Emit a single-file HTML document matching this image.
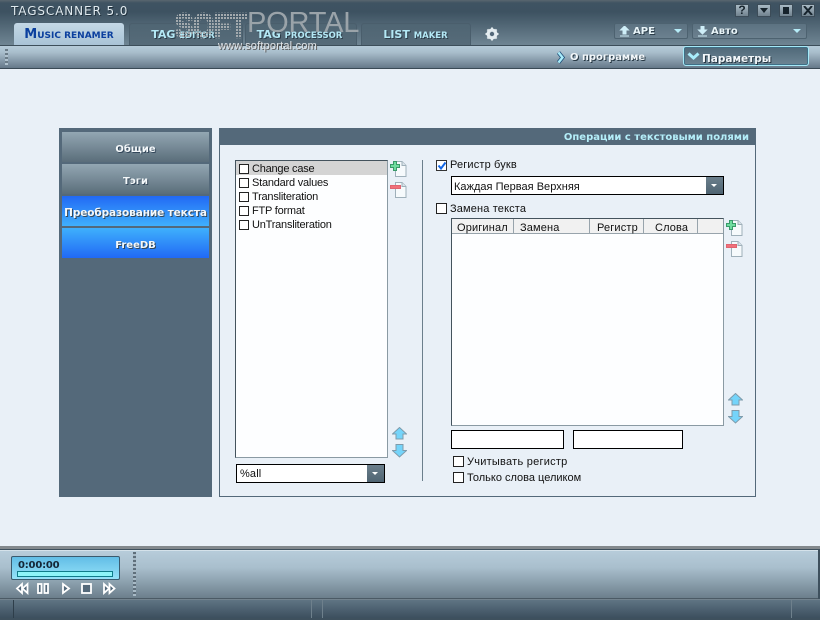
<!DOCTYPE html>
<html><head><meta charset="utf-8">
<style>
html,body{margin:0;padding:0;width:820px;height:620px;overflow:hidden;background:#e9f0f7}
body{position:relative;font-family:"Liberation Sans","DejaVu Sans",sans-serif;font-size:11px;color:#111}
.a{position:absolute;box-sizing:border-box;white-space:nowrap}
.t{position:absolute;white-space:nowrap;line-height:14px;letter-spacing:.15px}
.l{letter-spacing:-.22px}
.b{font-weight:bold;font-family:"DejaVu Sans",sans-serif}
.cb{position:absolute;width:11px;height:11px;box-sizing:border-box;border:1px solid #222;background:#fff}
.cs{width:10px;height:10px}
.nav{position:absolute;left:62px;width:147px;height:30px;text-align:center;line-height:35px;font-family:"DejaVu Sans",sans-serif;font-weight:bold;font-size:10px;color:#f4f8fa;text-shadow:1px 1px 0 #33475a;overflow:hidden}
.g{background:linear-gradient(#93a7b3,#5a6d7a)}
.tab{position:absolute;top:23px;height:22px;background:linear-gradient(#4f6573,#566b79);border-radius:3px 3px 0 0;border:1px solid #4a5e6c;border-bottom:0;box-sizing:border-box;text-align:center;line-height:22px;font-family:"DejaVu Sans",sans-serif;font-weight:bold;color:#b4e8f5;font-size:11px;text-shadow:1px 1px 0 #2c3d49}
.tab small{font-size:8.5px}
.wbtn{position:absolute;top:4px;width:14px;height:13px;background:linear-gradient(#a9bac4,#71838f);border:1px solid #3c4c58;box-sizing:border-box}
.combo{position:absolute;top:23px;height:16px;box-sizing:border-box;background:linear-gradient(#5c7281,#6c818f);border:1px solid #4d6270;border-radius:2px;font-family:"DejaVu Sans",sans-serif;font-weight:bold;font-size:10px;color:#e8f4f8;line-height:15px;text-shadow:1px 1px 0 #2c3d49}
.input{position:absolute;box-sizing:border-box;border:1px solid #000;background:#fff;height:19px}
.dd{position:absolute;top:0;right:0;width:17px;height:17px;background:linear-gradient(#6b7f8c,#4f6472)}
.dd:after{content:"";position:absolute;left:5px;top:7px;border:3px solid transparent;border-top:3px solid #fff;border-bottom:0}
</style></head><body>

<!-- header -->
<div class="a" style="left:0;top:0;width:820px;height:45px;background:linear-gradient(#5a666f 0,#3f5362 3px,#3d5261 12px,#6f8593 45px)"></div>
<div class="a b" style="left:11px;top:4px;font-size:12px;color:#dfe9ee;letter-spacing:.9px;line-height:14px;text-shadow:1px 1px 0 #22323e;font-weight:normal">TAGSCANNER 5.0</div>

<div class="tab" style="left:129px;width:114px;padding-right:6px">TAG <small>EDITOR</small></div>
<div class="tab" style="left:245px;width:112px;padding-right:3px">TAG <small>PROCESSOR</small></div>
<div class="tab" style="left:361px;width:110px;padding-right:1px">LIST <small>MAKER</small></div>
<div class="a" style="left:14px;top:23px;width:110px;height:22px;background:linear-gradient(#c4d8e6,#a9c3d6);border-radius:3px 3px 0 0;text-align:center;font-family:'DejaVu Sans',sans-serif;font-weight:bold;color:#0b3f9e;font-size:13px;line-height:24px"><span>M</span><span style="font-size:9px">USIC RENAMER</span></div>

<!-- watermark -->
<svg class="a" style="left:170px;top:8px;z-index:1" width="85" height="34" viewBox="0 0 85 34">
<defs><pattern id="dots" width="3" height="3" patternUnits="userSpaceOnUse"><rect width="2" height="2" fill="#a3aaae"/></pattern></defs>
<text x="5" y="29" font-family="Liberation Sans" font-weight="bold" font-size="33" fill="url(#dots)" stroke="url(#dots)" stroke-width="2.500" textLength="72" lengthAdjust="spacingAndGlyphs">SOFT</text>
</svg>
<div class="a" style="left:247px;top:8px;font-size:29px;color:#9aa3a9;line-height:30px;letter-spacing:-.2px">PORTAL</div>
<div class="a" style="left:218px;top:40px;font-size:11px;color:#dfe4e8;line-height:13px;text-shadow:1px 1px 0 #555;letter-spacing:.2px;z-index:3">www.softportal.com</div>

<!-- gear -->
<svg class="a" style="left:484px;top:26px" width="16" height="16" viewBox="0 0 16 16"><circle cx="8" cy="8" r="4.2" fill="none" stroke="#e4ecf0" stroke-width="2.6"/><path d="M8 1.500v13M1.500 8h13M3.400 3.400l9.200 9.200M12.600 3.400l-9.200 9.200" stroke="#e4ecf0" stroke-width="2"/><circle cx="8" cy="8" r="2.2" fill="#54697a"/></svg>

<!-- window buttons -->
<div class="wbtn" style="left:735px;text-align:center;font:bold 12px/11px 'Liberation Sans',sans-serif;color:#16232c">?</div>
<div class="wbtn" style="left:757px"><div style="position:absolute;left:2px;top:3px;border:4.5px solid transparent;border-top:5px solid #16232c;border-bottom:0"></div></div>
<div class="wbtn" style="left:779px"><div style="position:absolute;left:3px;top:2px;width:6px;height:7px;background:#16232c"></div></div>
<div class="wbtn" style="left:801px"><svg style="position:absolute;left:1px;top:1px" width="10" height="9"><path d="M1 0l8 9M9 0l-8 9" stroke="#16232c" stroke-width="2"/></svg></div>

<!-- combos -->
<div class="combo" style="left:614px;width:74px"><svg style="position:absolute;left:4px;top:2px" width="11" height="11"><path d="M5.500 0l4 4H7v4H4V4H1.500zM1 10h9" fill="#cfeef8" stroke="#cfeef8"/></svg><span style="position:absolute;left:18px">APE</span><div style="position:absolute;right:5px;top:5px;border:4px solid transparent;border-top:4px solid #b6ecf8;border-bottom:0"></div></div>
<div class="combo" style="left:692px;width:115px"><svg style="position:absolute;left:4px;top:2px" width="11" height="11"><path d="M5.500 8l4-4H7V0H4v4H1.500zM1 10h9" fill="#cfeef8" stroke="#cfeef8"/></svg><span style="position:absolute;left:18px">Авто</span><div style="position:absolute;right:5px;top:5px;border:4px solid transparent;border-top:4px solid #b6ecf8;border-bottom:0"></div></div>

<!-- toolbar -->
<div class="a" style="left:0;top:45px;width:820px;height:24px;background:linear-gradient(#b6cbd9,#a8bdcb 30%,#66798a);border-top:1px solid #3d4e5a;border-bottom:1px solid #3a4a56"></div>
<div class="a" style="left:5px;top:49px;width:3px;height:16px;background:repeating-linear-gradient(#6b7c88 0 2px,#b0c2ce 2px 4px)"></div>

<svg class="a" style="left:556px;top:51px" width="10" height="13"><path d="M2.500 1.500l4 5-4 5" fill="none" stroke="#1f4f79" stroke-width="4"/><path d="M2.500 1.500l4 5-4 5" fill="none" stroke="#a8ecfb" stroke-width="2.400"/></svg>
<div class="a b" style="left:570px;top:51px;font-size:10px;color:#f2f7fa;line-height:13px;text-shadow:1px 1px 0 #263743">О программе</div>

<div class="a" style="left:683px;top:46px;width:126px;height:20px;border:1px solid #a5e9f7;border-radius:3px;background:linear-gradient(#4f6878,#6d8594);box-shadow:inset 0 0 0 1px #3f6f86"></div>
<svg class="a" style="left:687px;top:52px" width="13" height="9"><path d="M1.500 1.500l5 4.500 5-4.500" fill="none" stroke="#a8ecfb" stroke-width="3"/></svg>
<div class="a b" style="left:702px;top:52px;font-size:10.5px;color:#f2f7fa;line-height:14px;text-shadow:1px 1px 0 #263743">Параметры</div>

<!-- left panel -->
<div class="a" style="left:59px;top:128px;width:153px;height:369px;background:#54697a"></div>
<div class="nav g" style="top:132px">Общие</div>
<div class="nav g" style="top:164px">Тэги</div>
<div class="nav" style="top:196px;background:linear-gradient(#2169f5,#3fb0fc);font-size:10.5px;letter-spacing:-.1px">Преобразование текста</div>
<div class="nav" style="top:228px;background:linear-gradient(#3fb0fc,#2169f5)">FreeDB</div>

<!-- right panel -->
<div class="a" style="left:219px;top:128px;width:537px;height:369px;border:1px solid #54697a;background:#e9f0f7"></div>
<div class="a" style="left:219px;top:128px;width:537px;height:17px;background:#54697a;color:#b4eef9;text-align:right;padding-right:7px;font:bold 10px/20px 'DejaVu Sans',sans-serif">Операции с текстовыми полями</div>

<!-- list -->
<div class="a" style="left:235px;top:160px;width:153px;height:298px;background:#fdfeff;border:1px solid #8a9aa3;border-top-color:#44535d;border-left-color:#44535d"></div>
<div class="a" style="left:236px;top:161px;width:151px;height:14px;background:#d4d4d4"></div>
<div class="cb cs" style="left:239px;top:164px"></div><div class="t l" style="left:252px;top:162px">Change case</div>
<div class="cb cs" style="left:239px;top:178px"></div><div class="t l" style="left:252px;top:176px">Standard values</div>
<div class="cb cs" style="left:239px;top:192px"></div><div class="t l" style="left:252px;top:190px">Transliteration</div>
<div class="cb cs" style="left:239px;top:206px"></div><div class="t l" style="left:252px;top:204px">FTP format</div>
<div class="cb cs" style="left:239px;top:220px"></div><div class="t l" style="left:252px;top:218px">UnTransliteration</div>

<!-- add / remove icons left -->
<svg class="a" style="left:389px;top:159px" width="20" height="40" viewBox="0 0 20 40">
<path d="M6.500 2.500h6.500l4 4v11H6.500z" fill="#f6fafc" stroke="#9fb0ba"/><path d="M13 2.500v4h4" fill="#dbe5ea" stroke="#9fb0ba"/>
<path d="M4.500 2.500v3h-3v3h3v3h3v-3h3v-3h-3v-3z" fill="#6fdc9f" stroke="#3a9a6a"/>
<path d="M6.500 23.500h6.500l4 4v11H6.500z" fill="#f6fafc" stroke="#9fb0ba"/><path d="M13 23.500v4h4" fill="#dbe5ea" stroke="#9fb0ba"/>
<rect x="1.500" y="26.500" width="10" height="3" fill="#f0707a" stroke="#e06470"/>
</svg>
<!-- arrows left -->
<svg class="a" style="left:392px;top:427px" width="15" height="31" viewBox="0 0 15 31">
<path d="M7.500 .5L14.500 7H11v5H4V7H.500z" fill="#74d4fa" stroke="#7f9bab"/>
<path d="M4 17.500h7v6h3.500L7.500 30 .5 23.500H4z" fill="#74d4fa" stroke="#7f9bab"/>
</svg>

<!-- %all combo -->
<div class="input" style="left:236px;top:464px;width:149px"><div class="t" style="left:3px;top:2px">%all</div><div class="dd"></div></div>

<!-- divider -->
<div class="a" style="left:422px;top:160px;width:1px;height:321px;background:#6b7f8c"></div>

<!-- right -->
<div class="cb" style="left:436px;top:160px;width:11px;height:11px;border-color:#333"></div>
<svg class="a" style="left:437px;top:161px" width="10" height="10"><path d="M1.500 4.500l2.500 3 4.500-6" fill="none" stroke="#1367e6" stroke-width="2"/></svg>
<div class="t" style="left:450px;top:158px">Регистр букв</div>

<div class="input" style="left:451px;top:176px;width:273px"><div class="t" style="left:2px;top:3px;letter-spacing:.02px">Каждая Первая Верхняя</div><div class="dd"></div></div>

<div class="cb" style="left:436px;top:203px"></div>
<div class="t" style="left:450px;top:202px">Замена текста</div>

<!-- table -->
<div class="a" style="left:451px;top:218px;width:273px;height:208px;background:#fdfeff;border:1px solid #8a9aa3;border-top-color:#44535d;border-left-color:#44535d"></div>
<div class="a" style="left:452px;top:219px;width:271px;height:15px;background:#f1f1f1;border-bottom:1px solid #98a4ac"></div>
<div class="a" style="left:513px;top:219px;width:1px;height:15px;background:#98a4ac"></div>
<div class="a" style="left:589px;top:219px;width:1px;height:15px;background:#98a4ac"></div>
<div class="a" style="left:643px;top:219px;width:1px;height:15px;background:#98a4ac"></div>
<div class="a" style="left:697px;top:219px;width:1px;height:15px;background:#98a4ac"></div>
<div class="t" style="left:457px;top:221px">Оригинал</div>
<div class="t" style="left:520px;top:221px">Замена</div>
<div class="t" style="left:597px;top:221px">Регистр</div>
<div class="t" style="left:655px;top:221px">Слова</div>

<svg class="a" style="left:725px;top:218px" width="20" height="40" viewBox="0 0 20 40">
<path d="M6.500 2.500h6.500l4 4v11H6.500z" fill="#f6fafc" stroke="#9fb0ba"/><path d="M13 2.500v4h4" fill="#dbe5ea" stroke="#9fb0ba"/>
<path d="M4.500 2.500v3h-3v3h3v3h3v-3h3v-3h-3v-3z" fill="#6fdc9f" stroke="#3a9a6a"/>
<path d="M6.500 23.500h6.500l4 4v11H6.500z" fill="#f6fafc" stroke="#9fb0ba"/><path d="M13 23.500v4h4" fill="#dbe5ea" stroke="#9fb0ba"/>
<rect x="1.500" y="26.500" width="10" height="3" fill="#f0707a" stroke="#e06470"/>
</svg>
<svg class="a" style="left:728px;top:393px" width="15" height="31" viewBox="0 0 15 31">
<path d="M7.500 .5L14.500 7H11v5H4V7H.500z" fill="#74d4fa" stroke="#7f9bab"/>
<path d="M4 17.500h7v6h3.500L7.500 30 .5 23.500H4z" fill="#74d4fa" stroke="#7f9bab"/>
</svg>

<div class="input" style="left:451px;top:430px;width:113px"></div>
<div class="input" style="left:573px;top:430px;width:110px"></div>

<div class="cb" style="left:453px;top:456px"></div>
<div class="t" style="left:467px;top:455px;letter-spacing:.25px">Учитывать регистр</div>
<div class="cb" style="left:453px;top:472px"></div>
<div class="t" style="left:467px;top:471px;letter-spacing:0">Только слова целиком</div>

<!-- bottom -->
<div class="a" style="left:0;top:546px;width:820px;height:74px;background:#3e505d"></div>
<div class="a" style="left:0;top:546px;width:820px;height:3px;background:#83898d"></div>
<div class="a" style="left:0;top:550px;width:818px;height:49px;background:linear-gradient(#b7ccda,#a9bfcd 35%,#6c7f8c);border-top:1px solid #d5e2ea;border-bottom:1px solid #4b5a65"></div>
<div class="a" style="left:0;top:599px;width:820px;height:19px;background:linear-gradient(#5f7483,#3c4f5e);border-top:1px solid #73838e"></div>
<div class="a" style="left:13px;top:600px;width:1px;height:18px;background:#2e3e4a"></div>
<div class="a" style="left:791px;top:600px;width:1px;height:18px;background:#6e808c"></div>
<div class="a" style="left:311px;top:600px;width:1px;height:18px;background:#6e808c"></div>
<div class="a" style="left:322px;top:600px;width:1px;height:18px;background:#6e808c"></div>

<div class="a" style="left:11px;top:556px;width:109px;height:24px;border:1px solid #3a5a6e;border-radius:2px;background:linear-gradient(#62bde6,#95e2f8)"></div>
<div class="a b" style="left:18px;top:559px;font-size:10px;line-height:13px;letter-spacing:-.2px;color:#142636">0:00:00</div>
<div class="a" style="left:17px;top:571px;width:96px;height:6px;background:#8ef4f8;border:1px solid #0f7c8a"></div>
<div class="a" style="left:133px;top:552px;width:3px;height:44px;background:repeating-linear-gradient(#5f6f7b 0 2px,#a8bac6 2px 4px)"></div>

<svg class="a" style="left:15px;top:581px" width="105" height="14" viewBox="0 0 105 14" fill="#54697a" stroke="#fff" stroke-width="1.800">
<path d="M7 3L2 7.500l5 4.500zM12.500 3L7.500 7.500l5 4.500z"/><rect x="23" y="3" width="3.500" height="9"/><rect x="29.500" y="3" width="3.500" height="9"/>
<path d="M48 3l6 4.500-6 4.500z"/><rect x="67" y="3" width="9" height="9"/>
<path d="M89 3l5 4.500-5 4.500zM94.500 3l5 4.500-5 4.500z"/>
</svg>

</body></html>
